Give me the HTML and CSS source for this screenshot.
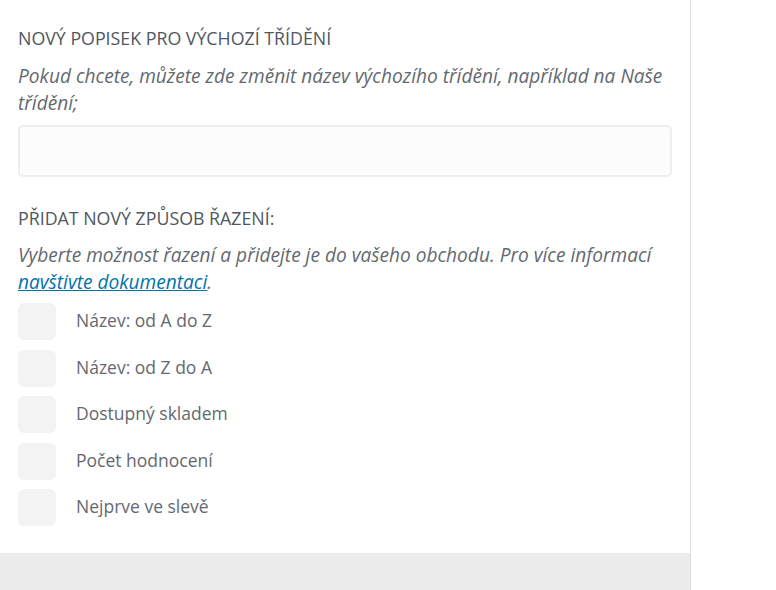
FILE: index.html
```html
<!DOCTYPE html>
<html lang="cs">
<head>
<meta charset="utf-8">
<title>Řazení</title>
<link rel="stylesheet" href="styles.css">
</head>
<body>
<div class="page">
  <div class="panel">
    <div class="content">
      <section class="field">
        <h3 class="label">NOVÝ POPISEK PRO VÝCHOZÍ TŘÍDĚNÍ</h3>
        <p class="desc">Pokud chcete, můžete zde změnit název výchozího třídění, například na Naše třídění;</p>
        <input class="text-input" type="text">
      </section>
      <section class="field">
        <h3 class="label">PŘIDAT NOVÝ ZPŮSOB ŘAZENÍ:</h3>
        <p class="desc">Vyberte možnost řazení a přidejte je do vašeho obchodu. Pro více informací <a href="#" class="link">navštivte dokumentaci</a>.</p>
        <ul class="options">
          <li class="option"><span class="box"></span><span class="opt-label">Název: od A do Z</span></li>
          <li class="option"><span class="box"></span><span class="opt-label">Název: od Z do A</span></li>
          <li class="option"><span class="box"></span><span class="opt-label">Dostupný skladem</span></li>
          <li class="option"><span class="box"></span><span class="opt-label">Počet hodnocení</span></li>
          <li class="option"><span class="box"></span><span class="opt-label">Nejprve ve slevě</span></li>
        </ul>
      </section>
    </div>
    <div class="footer"></div>
  </div>
</div>
</body>
</html>
```
FILE: styles.css
```css
html, body {
  margin: 0;
  padding: 0;
  background: #fff;
}
body {
  font-family: "Open Sans", "Noto Sans", sans-serif;
  color: #50575e;
}
.page {
  display: flex;
  height: 590px;
  overflow: hidden;
}
.panel {
  width: 690px;
  border-right: 1px solid #dcdcde;
  display: flex;
  flex-direction: column;
}
.content {
  flex: 1;
  padding: 26px 18px 0 18px;
}
.field + .field {
  margin-top: 29px;
}
.label {
  margin: 0;
  font-size: 17.8px;
  line-height: 24px;
  font-weight: 400;
  color: #50575e;
}
.desc {
  margin: 12.5px 0 0 0;
  font-size: 19.1px;
  line-height: 27px;
  font-style: italic;
  color: #646970;
}
.link {
  color: #0073aa;
  text-decoration: underline;
}
.text-input {
  display: block;
  box-sizing: border-box;
  width: 654px;
  height: 52px;
  margin-top: 8px;
  border: 2px solid #eeeeee;
  border-radius: 5px;
  background: #fcfcfc;
  outline: none;
}
.options {
  list-style: none;
  margin: 7px 0 0 0;
  padding: 0;
  display: flex;
  flex-direction: column;
  gap: 9.5px;
}
.option {
  display: flex;
  align-items: center;
  gap: 20px;
  height: 37px;
}
.box {
  width: 38px;
  height: 37px;
  border-radius: 6px;
  background: #f3f3f3;
  flex: none;
}
.opt-label {
  font-size: 17.5px;
  color: #646970;
  margin-bottom: 3px;
}
.footer {
  height: 37px;
  background: #ececec;
}
```
